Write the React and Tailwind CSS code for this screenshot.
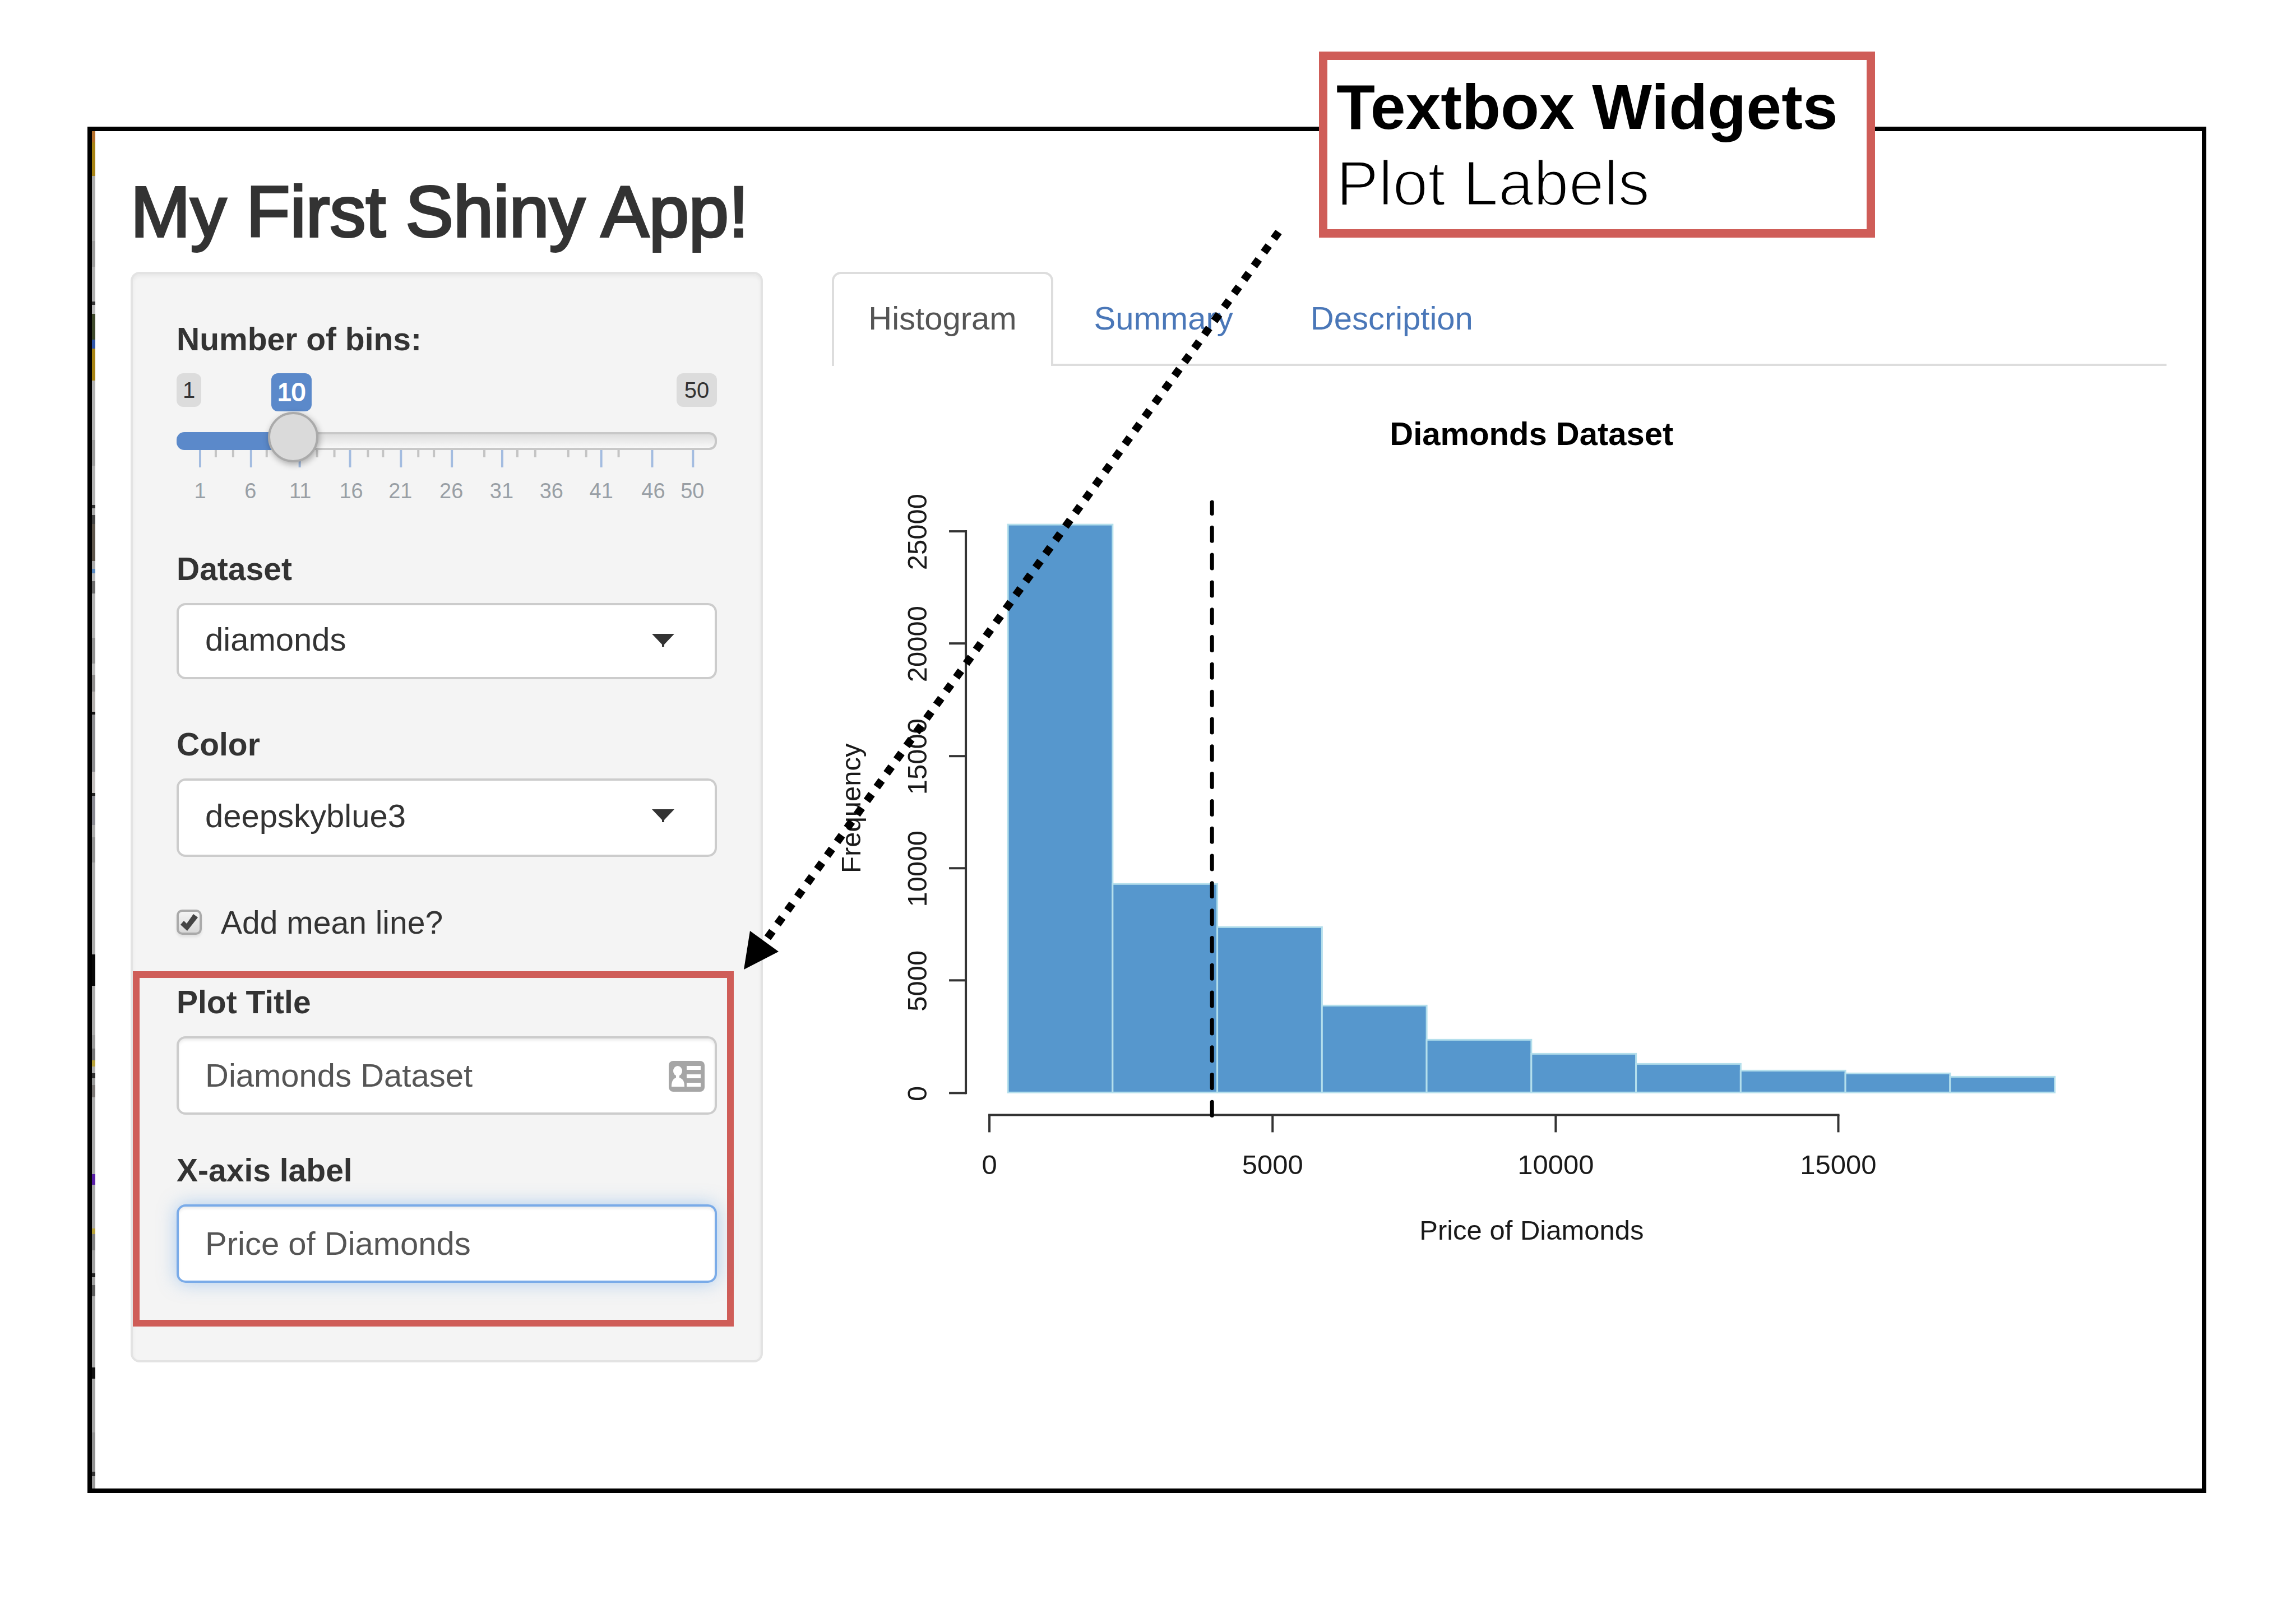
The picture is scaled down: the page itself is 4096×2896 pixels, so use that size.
import React, { useState } from "react";

const EDGE = [
  [0, 20, "#b5702a"], [20, 60, "#a88414"], [80, 116, "#adadad"], [196, 46, "#9b9b9b"],
  [242, 62, "#b0b0b0"], [304, 6, "#333333"], [310, 16, "#bcbcbc"], [326, 46, "#3f4a2c"],
  [372, 16, "#2f55a8"], [388, 57, "#a88414"], [445, 106, "#b2b2b2"], [551, 46, "#9b9b9b"],
  [597, 70, "#b2b2b2"], [667, 6, "#333333"], [673, 12, "#aaaaaa"], [685, 16, "#444444"],
  [701, 66, "#5e564c"], [767, 14, "#aaaaaa"], [781, 8, "#5a8ac0"], [789, 14, "#bbbbbb"],
  [803, 22, "#6a6a6a"], [825, 79, "#b2b2b2"], [904, 46, "#929292"], [950, 20, "#bbbbbb"],
  [970, 30, "#8f8d8c"], [1000, 36, "#b4b0ae"], [1036, 5, "#151515"], [1041, 102, "#8d8d90"],
  [1143, 38, "#c4c0bf"], [1181, 5, "#222222"], [1186, 52, "#8a8a92"], [1238, 22, "#ababab"],
  [1260, 45, "#929292"], [1305, 164, "#ababab"], [1469, 56, "#080808"], [1525, 88, "#ababab"],
  [1613, 24, "#9a9a9a"], [1637, 21, "#777777"], [1658, 11, "#b8a23a"], [1669, 12, "#b0b0b0"],
  [1681, 9, "#303030"], [1690, 12, "#9a9a9a"], [1702, 22, "#7c7876"], [1724, 137, "#ababab"],
  [1861, 19, "#5a1fa8"], [1880, 78, "#a9a9a9"], [1958, 10, "#b8a23a"], [1968, 29, "#808080"],
  [1997, 41, "#a2a2a2"], [2038, 7, "#222222"], [2045, 14, "#a0a0a0"], [2059, 20, "#5c5c5c"],
  [2079, 127, "#a9a9a9"], [2206, 20, "#111111"], [2226, 96, "#a6a6a6"], [2322, 70, "#929292"],
  [2392, 8, "#333333"], [2400, 22, "#9a9a9a"],
];

function EdgeStrip() {
  return (
    <svg className="w-[6px] shrink-0 self-stretch" viewBox="0 0 6 2422" preserveAspectRatio="none" aria-hidden="true">
      {EDGE.map(([y, h, c]) => (
        <rect key={y} x="0" y={y} width="6" height={h} fill={c} />
      ))}
    </svg>
  );
}

const MAJOR = [42, 133, 220, 310, 401, 492, 582, 759, 850, 923];
const MINOR = [70, 101, 161, 251, 282, 342, 369, 432, 460, 550, 609, 641, 700, 732, 790];
const RULER = [[42, 1], [132, 6], [221, 11], [312, 16], [400, 21], [491, 26], [581, 31], [670, 36], [759, 41], [852, 46], [922, 50]];

function Slider() {
  const [value, setValue] = useState(10);
  const pct = ((value - 1) / 49) * 100;
  return (
    <div className="relative mt-5">
      <div className="flex h-[68px] items-start justify-between text-[40px] leading-[60px] text-[#333]">
        <span className="rounded-[12px] bg-[#dcdcdc] px-[11px]">1</span>
        <span className="rounded-[12px] bg-[#dcdcdc] px-[14px]">50</span>
      </div>
      <div className="absolute inset-x-[44px] top-0 h-[68px]">
        <output
          htmlFor="bins"
          className="absolute top-0 -translate-x-1/2 rounded-[12px] bg-[#5b89ca] px-[11px] text-[45px] leading-[68px] text-white [-webkit-text-stroke:2px_white]"
          style={{ left: `${pct}%` }}
        >
          {value}
        </output>
      </div>
      <input
        id="bins"
        type="range"
        min="1"
        max="50"
        value={value}
        onChange={(e) => setValue(Number(e.target.value))}
        style={{ "--fill": `calc(44px + (100% - 88px) * ${pct / 100})` }}
        className="relative z-10 block h-[90px] w-full appearance-none bg-transparent outline-none [&::-webkit-slider-runnable-track]:box-border [&::-webkit-slider-runnable-track]:h-[32px] [&::-webkit-slider-runnable-track]:translate-y-[8px] [&::-webkit-slider-runnable-track]:rounded-[14px] [&::-webkit-slider-runnable-track]:border-[4px] [&::-webkit-slider-runnable-track]:border-solid [&::-webkit-slider-runnable-track]:border-transparent [&::-webkit-slider-runnable-track]:[background:linear-gradient(#5b89ca,#5b89ca)_0_0/var(--fill)_100%_no-repeat_border-box,linear-gradient(#dedede,#f8f8f8)_padding-box,linear-gradient(#c8c8c8,#c8c8c8)_border-box] [&::-webkit-slider-thumb]:-mt-[40px] [&::-webkit-slider-thumb]:size-[90px] [&::-webkit-slider-thumb]:appearance-none [&::-webkit-slider-thumb]:rounded-full [&::-webkit-slider-thumb]:border-[4px] [&::-webkit-slider-thumb]:border-solid [&::-webkit-slider-thumb]:border-[#aaa] [&::-webkit-slider-thumb]:bg-[#dadada] [&::-webkit-slider-thumb]:shadow-[2px_4px_12px_rgba(0,0,0,0.3)]"
      />
      <svg className="-mt-[22px] block w-full" viewBox="0 0 966 100" aria-hidden="true">
        {MAJOR.map((x) => (
          <rect key={x} x={x - 2} y="0" width="4" height="32" fill="#a3bce0" />
        ))}
        {MINOR.map((x) => (
          <rect key={x} x={x - 2} y="0" width="4" height="14" fill="#c4c4c4" />
        ))}
        {RULER.map(([x, t]) => (
          <text key={t} x={x} y="87" textAnchor="middle" fontSize="38" fill="#999fa5">{t}</text>
        ))}
      </svg>
    </div>
  );
}

function SelectField({ id, label, options, className, height }) {
  return (
    <div className={className}>
      <label htmlFor={id} className="block text-[57px] leading-[82px] font-bold">{label}</label>
      <div className="relative mt-5">
        <select
          id={id}
          className={`block w-full appearance-none rounded-[16px] border-[4px] border-[#ccc] bg-white pr-[140px] pb-[6px] pl-[47px] text-[58px] leading-[82px] text-[#333] outline-none ${height}`}
        >
          {options.map((o) => (
            <option key={o}>{o}</option>
          ))}
        </select>
        <svg className="pointer-events-none absolute top-[55px] right-[76px] h-[24px] w-[40px]" viewBox="0 0 40 24" aria-hidden="true">
          <path d="M0 0H40L22 19V23H18V19Z" fill="#333" />
        </svg>
      </div>
    </div>
  );
}

function ContactIcon() {
  return (
    <svg className="absolute top-[44px] right-[22px] h-[55px] w-[64px]" viewBox="0 0 64 55" aria-hidden="true">
      <rect width="64" height="55" rx="8" fill="#a6a6a6" />
      <ellipse cx="16" cy="18" rx="8" ry="9" fill="#fff" />
      <path d="M13 24H19V30C25 32 28 36 28 46H5C5 36 8 32 13 30Z" fill="#fff" />
      <path d="M32 9H57V16H32ZM32 24H57V31H32ZM32 39H57V46H32Z" fill="#fff" />
    </svg>
  );
}

function Sidebar() {
  return (
    <form className="rounded-[16px] border-[4px] border-[#e3e3e3] bg-[#f4f4f4] px-[78px] pt-[75px] pb-[60px] shadow-[inset_0_4px_6px_rgba(0,0,0,0.05)]">
      <label htmlFor="bins" className="block text-[57px] leading-[82px] font-bold">Number of bins:</label>
      <Slider />
      <SelectField id="dataset" label="Dataset" options={["diamonds"]} className="mt-[72px]" height="h-[136px]" />
      <SelectField id="color" label="Color" options={["deepskyblue3"]} className="mt-[75px]" height="h-[140px]" />
      <div className="mt-[76px] flex items-center">
        <span className="relative block size-[45px]">
          <input
            id="mean"
            type="checkbox"
            defaultChecked
            className="peer block size-[45px] appearance-none rounded-[10px] border-[4px] border-[#aaa] bg-linear-to-b from-[#f4f4f4] to-[#d9d9d9] shadow-[0_4px_4px_rgba(0,0,0,0.08)]"
          />
          <svg className="pointer-events-none absolute inset-0 hidden size-[45px] peer-checked:block" viewBox="0 0 45 45" aria-hidden="true">
            <path d="M7 27L13 20L18 25L30 8L38 14L19 38Z" fill="#444" />
          </svg>
        </span>
        <label htmlFor="mean" className="ml-[34px] text-[57px] leading-[82px]">Add mean line?</label>
      </div>
      <div className="-mr-[30px] -ml-[78px] mt-[46px] border-[12px] border-[#cf5d58] pt-[2px] pr-[18px] pb-[66px] pl-[66px]">
        <label htmlFor="title" className="block text-[57px] leading-[82px] font-bold">Plot Title</label>
        <div className="relative mt-5">
          <input
            id="title"
            type="text"
            defaultValue="Diamonds Dataset"
            className="block h-[140px] w-full rounded-[16px] border-[4px] border-[#ccc] bg-white pr-[100px] pl-[47px] text-[58px] text-[#555] shadow-[inset_0_4px_4px_rgba(0,0,0,0.07)] outline-none"
          />
          <ContactIcon />
        </div>
        <label htmlFor="xlab" className="mt-[58px] block text-[57px] leading-[82px] font-bold">X-axis label</label>
        <input
          id="xlab"
          type="text"
          defaultValue="Price of Diamonds"
          className="mt-5 block h-[140px] w-full rounded-[16px] border-[4px] border-[#7aabe8] bg-white px-[47px] text-[58px] text-[#555] shadow-[inset_0_4px_4px_rgba(0,0,0,0.07),0_0_32px_rgba(102,165,233,0.5)] outline-none"
        />
      </div>
    </form>
  );
}

const BARS = [935, 1576, 1653, 1793, 1854, 1879, 1897, 1909, 1914, 1920];
const Y_TICKS = [[1949, "0"], [1748, "5000"], [1548, "10000"], [1348, "15000"], [1147, "20000"], [947, "25000"]];
const X_TICKS = [[1766, "0"], [2271, "5000"], [2776, "10000"], [3280, "15000"]];

function Histogram() {
  return (
    <svg className="block w-full text-[49px]" viewBox="1485 652 2380 1600" role="img" aria-label="Histogram of diamond prices">
      <text x="2733" y="793" textAnchor="middle" fontSize="58" fontWeight="700">Diamonds Dataset</text>
      {BARS.map((y, i) => (
        <rect key={y} x={1799 + i * 186.7} y={y} width="186.7" height={1948 - y} fill="#5697cd" stroke="#b4dfec" strokeWidth="3" />
      ))}
      <g stroke="#333" strokeWidth="4" fill="none">
        <path d="M1724 945V1951" />
        {Y_TICKS.map(([y]) => (
          <path key={y} d={`M1694 ${y}H1724`} />
        ))}
        <path d="M1764 1988H3282" />
        {X_TICKS.map(([x]) => (
          <path key={x} d={`M${x} 1988V2019`} />
        ))}
      </g>
      <g fill="#1a1a1a" textAnchor="middle">
        {Y_TICKS.map(([y, t]) => (
          <text key={t} transform={`translate(1654 ${y + 1}) rotate(-90)`}>{t}</text>
        ))}
        {X_TICKS.map(([x, t]) => (
          <text key={t} x={x} y="2094">{t}</text>
        ))}
        <text transform="translate(1536 1441) rotate(-90)">Frequency</text>
        <text x="2733" y="2211">Price of Diamonds</text>
      </g>
      <path d="M2163 1989V895" stroke="#000" strokeWidth="7" strokeLinecap="round" strokeDasharray="24 24.8" />
    </svg>
  );
}

function Tabs() {
  const link = "mr-2 block px-[65px] pt-[42px] pb-[40px] text-[58px] leading-[82px] text-[#4a77b8]";
  return (
    <div>
      <nav className="flex items-start border-b-[4px] border-[#ddd]">
        <a href="#histogram" aria-current="page" className="mr-2 -mb-[4px] block rounded-t-[16px] border-[4px] border-b-0 border-[#ddd] bg-white px-[61px] pt-[38px] pb-[44px] text-[58px] leading-[82px] text-[#555]">
          Histogram
        </a>
        <a href="#summary" className={link}>Summary</a>
        <a href="#description" className={link}>Description</a>
      </nav>
      <Histogram />
    </div>
  );
}

function Callout() {
  return (
    <aside className="absolute top-[92px] left-[2353px] h-[332px] w-[992px] border-[15px] border-[#cf5d58] bg-white px-[16px] pt-[16px] text-[113px] leading-[136px] whitespace-nowrap text-black">
      <p className="font-bold">Textbox Widgets</p>
      <p className="[-webkit-text-stroke:3px_white]">Plot Labels</p>
    </aside>
  );
}

function Pointer() {
  return (
    <svg className="pointer-events-none absolute inset-0 z-20 size-full" viewBox="0 0 4096 2896" aria-hidden="true">
      <path d="M2281 414L1369 1674" stroke="#000" strokeWidth="14" strokeDasharray="14.5 15.7" fill="none" />
      <path d="M1327 1730L1338 1661L1389 1698Z" fill="#000" />
    </svg>
  );
}

export default function App() {
  return (
    <div className="relative flex min-h-screen flex-col bg-white pt-[226px] pr-[160px] pb-[232px] pl-[156px] font-['Liberation_Sans',Arial,sans-serif] text-[#333]">
      <div className="flex flex-1 border-[8px] border-black">
        <EdgeStrip />
        <main className="flex-1 px-[63px] pt-[74px]">
          <h1 className="text-[128px] leading-[140px] whitespace-nowrap [-webkit-text-stroke:4px_#333]">My First Shiny App!</h1>
          <div className="mt-[37px] grid grid-cols-[1128fr_2380fr] items-start gap-x-[123px]">
            <Sidebar />
            <Tabs />
          </div>
        </main>
      </div>
      <Callout />
      <Pointer />
    </div>
  );
}
